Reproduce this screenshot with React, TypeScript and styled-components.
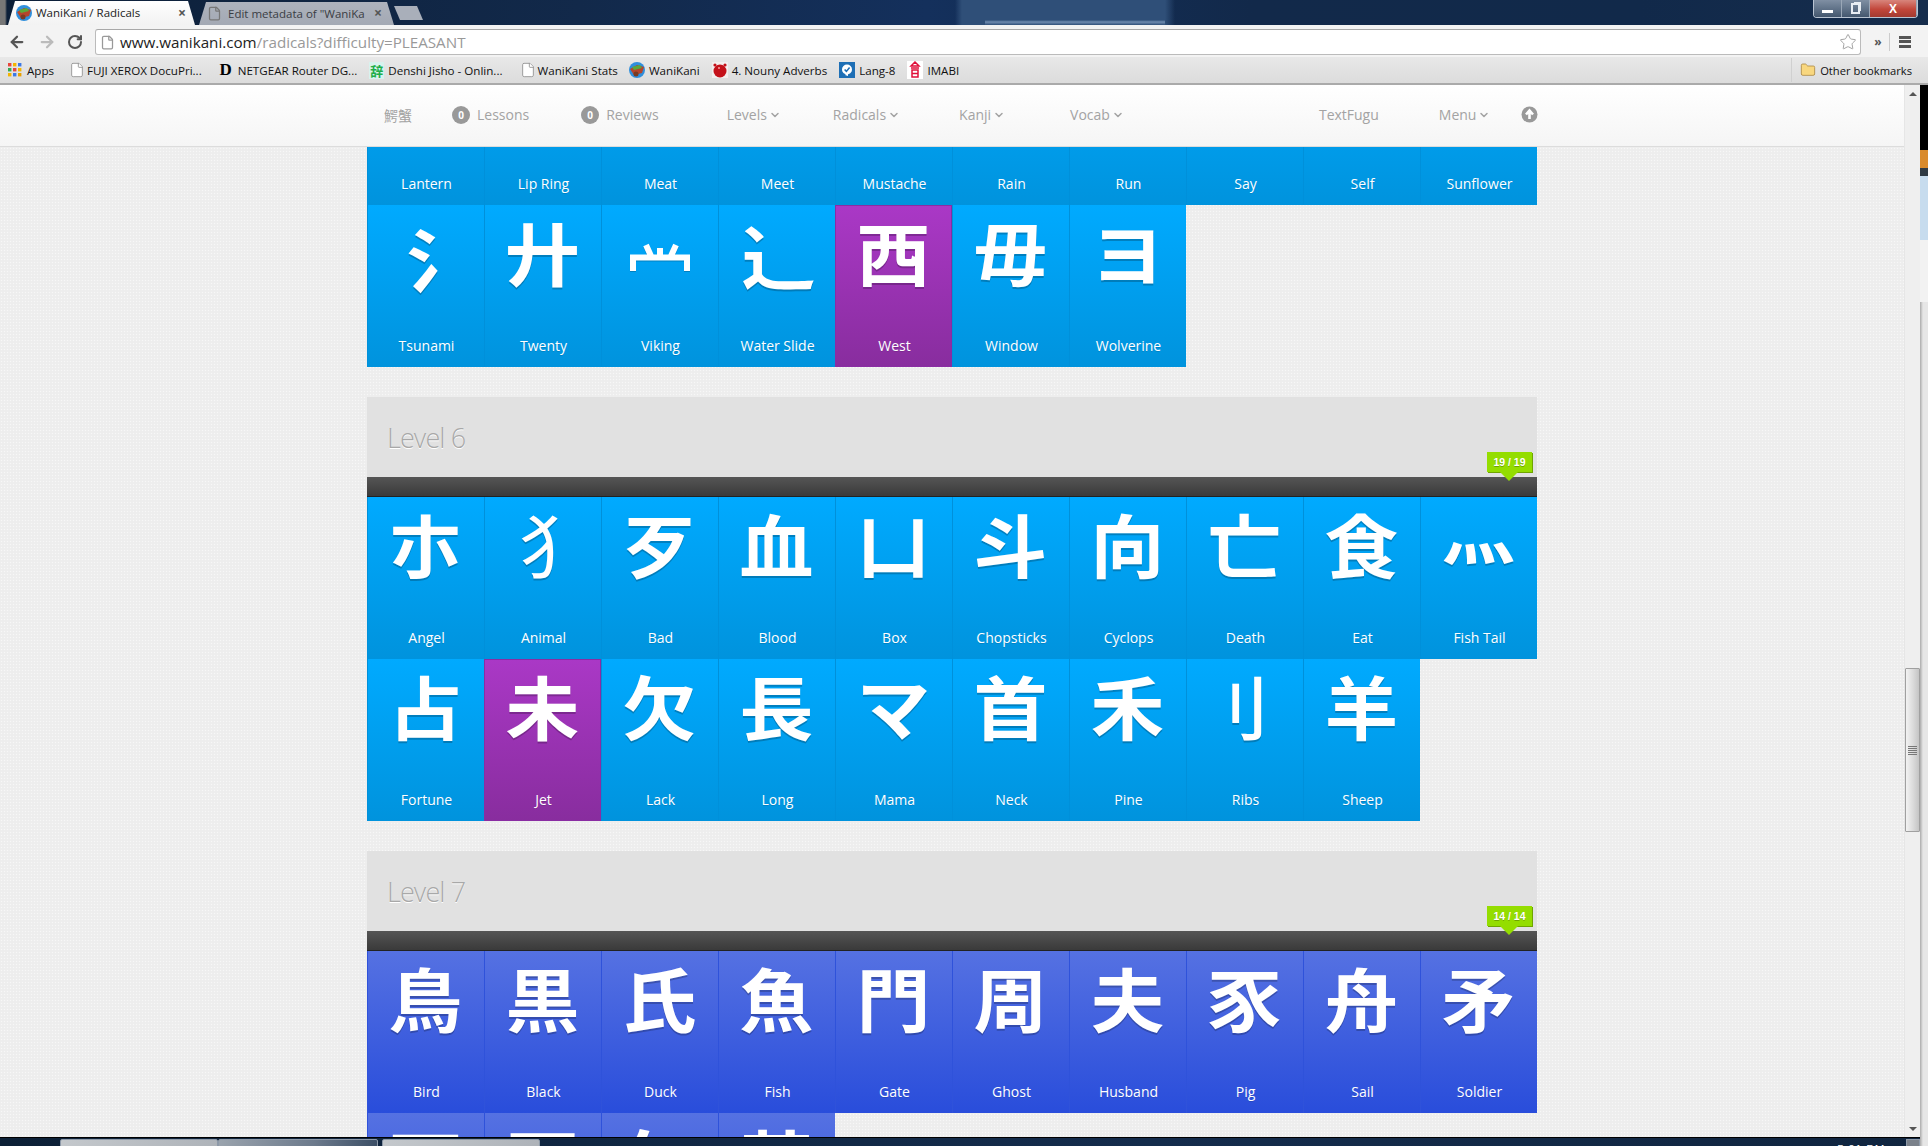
import React from "react";
import styled, { createGlobalStyle } from "styled-components";
import { ArrowLeft, ArrowRight, RotateCw, Star, File, Folder, ChevronDown } from "lucide-react";

const Global = createGlobalStyle`
  html, body { margin: 0; padding: 0; height: 1146px; overflow: hidden; background: #eee; }
  * { box-sizing: border-box; }
`;

const Shell = styled.div`
  width: 1928px; height: 1146px; display: flex; flex-direction: column; overflow: hidden;
  font-family: "Open Sans", "Noto Sans CJK JP", sans-serif;
`;

const TitleBar = styled.div`
  height: 25px; flex: none; display: flex; padding-left: 8px; align-items: flex-end;
  background:
    linear-gradient(90deg, #777 0 5px, transparent 7px),
    linear-gradient(180deg, transparent 20px, #6f8cb0 22px, transparent 25px) 985px 0 / 180px 100% no-repeat,
    linear-gradient(90deg, transparent 955px, #2f4f78 962px, #2f4f78 1165px, transparent 1175px),
    linear-gradient(90deg, #0c1f38 0, #12294a 30%, #14305c 48%, #12294a 65%, #11294a 85%, #162d4c 100%);
`;
const Tab = styled.div<{ $active?: boolean }>`
  width: ${p => (p.$active ? 187 : 195)}px; height: ${p => (p.$active ? 24 : 23)}px;
  margin-right: ${p => (p.$active ? 4 : 0)}px; padding: 0 ${p => (p.$active ? 9 : 12)}px 1px 8px;
  display: flex; align-items: center; gap: ${p => (p.$active ? 4 : 6)}px; font-size: 11.5px; white-space: nowrap;
  color: ${p => (p.$active ? "#222" : "#3a3d44")};
  background: ${p => (p.$active ? "linear-gradient(#fff,#f2f2f2)" : "linear-gradient(#aeb3bd,#a3a9b4)")};
  clip-path: polygon(0 100%, 7px 0, calc(100% - 7px) 0, 100% 100%);
`;
const TabTitle = styled.span`flex: 1;`;
const TabClose = styled.span`font-size: 14px; line-height: 16px; font-weight: 700; color: #555;`;
const NewTab = styled.div`
  width: 29px; height: 14px; margin-bottom: 5px; background: #a9afba;
  clip-path: polygon(6px 100%, 0 0, calc(100% - 6px) 0, 100% 100%);
`;
const WinControls = styled.div`
  margin-left: auto; margin-right: 10px; align-self: flex-start; width: 105px; height: 18px; display: flex;
  border: 1px solid #b9c4d2; border-top: none; border-radius: 0 0 4px 4px; overflow: hidden;
`;
const WinButton = styled.div<{ $w: number; $close?: boolean }>`
  width: ${p => p.$w}px; display: flex; align-items: center; justify-content: center;
  color: #fff; font: 700 12px "Liberation Sans", sans-serif; border-right: 1px solid #9aa7b7;
  background: ${p => (p.$close ? "linear-gradient(#d8857c,#c2463a 55%,#a23a30)" : "linear-gradient(#7f8fa3,#5f7187 55%,#44576e)")};
`;
const MinBar = styled.span`width: 11px; height: 3px; background: #fff; margin-top: 5px;`;
const RestoreBox = styled.span`width: 9px; height: 11px; border: 2px solid #e8edf3; box-shadow: 2px -2px 0 -1px #e8edf3;`;

const Toolbar = styled.div`
  height: 32px; flex: none; display: flex; align-items: center; padding-top: 2px; background: #f3f3f3; color: #666;
`;
const NavIcon = styled.span<{ $w: number; $c?: string }>`
  width: ${p => p.$w}px; display: flex; justify-content: center; color: ${p => p.$c || "#555"};
`;
const Omnibox = styled.div`
  width: 1766px; height: 26px; margin-left: 5px; display: flex; align-items: center; padding: 0 3px 0 4px; gap: 5px;
  background: #fff; border: 1px solid #bbb; border-top-color: #a8a8a8; border-radius: 3px;
  font-size: 15.2px; color: #999; white-space: nowrap;
`;
const UrlHost = styled.span`color: #222;`;
const Url = styled.span`flex: 1;`;
const ChevronMore = styled.span`width: 23px; text-align: center; font-size: 12px; color: #555; font-weight: 700; border-right: 1px solid #ccc; line-height: 18px; margin-left: 6px;`;
const Hamburger = styled.div`
  width: 30px; display: flex; justify-content: center;
  span { display: block; width: 12px; height: 12px; background: repeating-linear-gradient(#555 0 3px, transparent 3px 4.5px); }
`;

const Bookmarks = styled.div`
  height: 28px; flex: none; display: flex; align-items: center; padding: 0 16px 0 8px;
  background: linear-gradient(#e8e8e8,#dcdcdc); border-bottom: 2px solid #aaa;
  font-size: 11.6px; color: #111; white-space: nowrap;
`;
const Bookmark = styled.div<{ $left?: number; $gap?: number }>`
  display: flex; align-items: center; gap: ${p => p.$gap ?? 4}px; margin-left: ${p => p.$left ?? 13}px;
`;
const BookmarkRight = styled(Bookmark)`
  margin-left: auto; padding-left: 8px; border-left: 1px solid #d0d0d0; height: 24px; font-size: 11.2px;
`;
const JishoIcon = styled.span`
  width: 15px; height: 17px; background: #d8f2ee; color: #1fae4a; font: 700 13px/17px "Noto Sans CJK JP", sans-serif;
  display: flex; align-items: center; justify-content: center;
`;
const LogoD = styled.span`width: 16px; text-align: center; font: 900 17px "Liberation Serif", serif; color: #000;`;

const Body = styled.div`flex: 1; display: flex; min-height: 0;`;
const Main = styled.div`width: 1920px; display: flex; flex-direction: column;`;
const PageRow = styled.div`flex: 1; display: flex; min-height: 0;`;
const Page = styled.div`width: 1904px; display: flex; flex-direction: column; min-height: 0;`;
const Paper = styled.div`
  flex: 1; min-height: 0; overflow: hidden;
  background-color: #eeeeee;
  background-image: radial-gradient(rgba(255,255,255,.5) 0.7px, transparent 1px), radial-gradient(rgba(0,0,0,.02) 0.7px, transparent 1px);
  background-size: 3px 3px; background-position: 0 0, 1.5px 1.5px;
`;

const TopNav = styled.nav`
  height: 62px; flex: none; background: linear-gradient(#fff,#f5f5f5); border-bottom: 1px solid #dcdcdc;
  font-size: 14px; color: #a3a3a3;
`;
const NavInner = styled.div`width: 1170px; height: 100%; margin: 0 auto; display: flex; align-items: center; padding: 0 0 2px 0;`;
const NavItem = styled.span<{ $left: number }>`
  display: flex; align-items: center; gap: 2px; margin-left: ${p => p.$left}px; white-space: nowrap;
`;
const Count = styled.span`
  width: 18px; height: 18px; border-radius: 50%; background: #999; color: #fff; font-size: 10px; font-weight: 700;
  display: flex; align-items: center; justify-content: center; margin-right: 5px;
`;

const Scrolled = styled.div`margin-top: -104px;`;
const Section = styled.section`width: 1170px; margin: 0 auto 30px;`;
const LevelHead = styled.header`
  position: relative; height: 100px; background: #e1e1e1;
`;
const LevelTitle = styled.h2`
  margin: 0; height: 80px; padding-left: 20px; display: flex; align-items: center;
  font-size: 27px; font-weight: 300; letter-spacing: -.9px; color: #a8a8a8; text-shadow: 0 1px 0 #fff;
`;
const DarkBar = styled.div`height: 20px; background: linear-gradient(#555,#3a3a3a); border-bottom: 1px solid #222;`;
const Badge = styled.span`
  position: absolute; right: 5px; top: 55px; width: 45px; height: 20px; background: #94dd00;
  box-shadow: 1px 1px 0 #6fa500; color: #fff; font: 700 10.5px "Liberation Sans", sans-serif;
  display: flex; align-items: center; justify-content: center; text-shadow: 0 1px 0 rgba(0,0,0,.25);
  &::after {
    content: ""; position: absolute; left: 13px; top: 20px;
    border: 9px solid transparent; border-top-color: #94dd00; border-bottom: none;
  }
`;
const Grid = styled.div`display: grid; grid-template-columns: repeat(10, 117px); grid-auto-rows: 162px;`;
const palette = {
  blue: ["#00aaff", "#0093dd", "#0090da"],
  purple: ["#aa38c6", "#882d9e", "#882d9e"],
  indigo: ["#5571e2", "#294ddb", "#2f52da"],
};
type Kind = keyof typeof palette;
const TileBox = styled.div<{ $k: Kind }>`
  display: flex; flex-direction: column; align-items: center; color: #fff;
  background: linear-gradient(${p => palette[p.$k][0]}, ${p => palette[p.$k][1]});
  box-shadow: inset 1px 0 0 ${p => palette[p.$k][2]};
  ${p => p.$k === "purple" && "box-shadow: inset 0 0 0 1px #8a2da3;"}
`;
const Glyph = styled.span<{ $weight?: number; $x?: number; $y?: number }>`
  height: 102px; line-height: 102px; font-size: 69px; font-weight: ${p => p.$weight ?? 700};
  font-family: "Noto Sans CJK JP", sans-serif; text-shadow: 0 2px 0 rgba(0,0,0,.22);
  transform: translate(${p => p.$x ?? 0}px, ${p => -5 + (p.$y ?? 0)}px) scaleX(1.07);
`;
const RadicalArt = styled.span`
  height: 106px; display: flex; align-items: center;
  filter: drop-shadow(0 1px 0 rgba(0,0,0,.2));
`;
const Label = styled.span`
  margin-top: auto; padding: 0 0 11px 2px; font-size: 14px; line-height: 20px;
  text-shadow: 0 1px 0 rgba(0,0,0,.12);
`;

const Scrollbar = styled.div`
  width: 16px; display: flex; flex-direction: column; background: #efefef; border-left: 1px solid #e6e6e6;
`;
const ScrollArrow = styled.div<{ $up?: boolean }>`
  height: 17px; display: flex; align-items: center; justify-content: center;
  &::before {
    content: ""; border: 4px solid transparent;
    ${p => (p.$up ? "border-bottom: 4px solid #555; border-top: none;" : "border-top: 4px solid #555; border-bottom: none;")}
  }
`;
const Track = styled.div`flex: 1; padding-top: 566px;`;
const Thumb = styled.div`
  width: 15px; height: 164px; border: 1px solid #a0a0a0; border-radius: 1px; display: flex; align-items: center; justify-content: center;
  background: linear-gradient(90deg,#f3f3f3,#d8d8d8 60%,#c4c4c4);
  &::before { content: ""; width: 9px; height: 9px; background: repeating-linear-gradient(#777 0 1px, transparent 1px 2px); }
`;

const Taskbar = styled.div`
  height: 9px; flex: none; display: flex; align-items: flex-start; border-top: 1px solid #000; padding: 1px 0 0 60px; overflow: hidden;
  background: linear-gradient(90deg,#0c2036,#142c4c 60%,#10253f);
`;
const TaskButton = styled.div<{ $w: number; $dim?: boolean; $gap?: number }>`
  width: ${p => p.$w}px; height: 12px; margin-right: ${p => p.$gap ?? 0}px; border: 1px solid #8d99a8; border-radius: 2px 2px 0 0;
  background: ${p => (p.$dim ? "linear-gradient(90deg,#9aa3ad,#6c7a8c 60%,#3c4f66)" : "linear-gradient(90deg,#c4c8cc,#aeb3b9)")};
`;
const Clock = styled.span`
  margin-left: auto; margin-right: 21px; margin-top: 4px; font: 11.5px/12px "Liberation Sans", sans-serif; color: #fff; letter-spacing: .7px;
`;
const ShowDesktop = styled.div`width: 14px; height: 12px; border: 1px solid #8d99a8; background: #7a818a;`;

const Strip = styled.div`width: 8px; display: flex; flex-direction: column; background: #e9e9e9;`;
const StripBlock = styled.div<{ $h: number; $c: string }>`height: ${p => p.$h}px; background: ${p => p.$c};`;
const StripRest = styled.div`flex: 1; background: linear-gradient(90deg,#aaa,#e6e6e6 3px);`;

const WaniIcon = () => (
  <svg width="16" height="16" viewBox="0 0 16 16">
    <circle cx="8" cy="8" r="8" fill="#2f8fdc" />
    <path d="M1 7 L8 3 L15 5 L13 11 L5 13 Z" fill="#b5452c" />
    <path d="M3 5 L11 3 L13 6 L5 8 Z" fill="#5aa83a" />
    <circle cx="7" cy="12" r="2.5" fill="#7a3b22" />
  </svg>
);
const AppsIcon = () => {
  const c = ["#e8453c", "#f4b400", "#3b78e7", "#34a853", "#e8453c", "#f4b400", "#f4b400", "#3b78e7", "#e8a000"];
  return (
    <svg width="14" height="14" viewBox="0 0 14 14">
      {c.map((f, i) => <rect key={i} x={(i % 3) * 5} y={Math.floor(i / 3) * 5} width="3.4" height="3.4" fill={f} />)}
    </svg>
  );
};
const AppleIcon = () => (
  <svg width="16" height="16" viewBox="0 0 16 16">
    <rect width="16" height="16" fill="#f3eeee" />
    <circle cx="8" cy="9" r="6.5" fill="#c4111a" />
    <circle cx="3" cy="3" r="1.6" fill="#c4111a" />
    <circle cx="13" cy="3" r="1.6" fill="#c4111a" />
    <circle cx="7" cy="6" r="1" fill="#f6a0a0" />
  </svg>
);
const LangIcon = () => (
  <svg width="16" height="16" viewBox="0 0 16 16">
    <rect width="16" height="16" fill="#1e6fb5" />
    <circle cx="8" cy="7.5" r="5" fill="#fff" />
    <path d="M6 13 L9 10 L9 14 Z" fill="#fff" />
    <path d="M5.6 7.5 L7.4 9.4 L10.6 5.6" fill="none" stroke="#1e6fb5" strokeWidth="1.6" />
  </svg>
);
const ImabiIcon = () => (
  <svg width="16" height="18" viewBox="0 0 16 18">
    <rect width="16" height="18" fill="#fff" />
    <path d="M8 1 L12 5 H4 Z M4 7 H12 M5 9 H11 V16 H5 Z M5 12.5 H11" fill="none" stroke="#e0103a" strokeWidth="1.5" />
  </svg>
);
const UpCircle = () => (
  <svg width="17" height="17" viewBox="0 0 17 17">
    <circle cx="8.5" cy="8.5" r="8" fill="#999" />
    <path d="M8.5 13 V5 M5 8.5 L8.5 4.5 L12 8.5" fill="none" stroke="#fff" strokeWidth="2.6" />
  </svg>
);
const DocIcon = () => <File size={16} color="#888" fill="#fff" strokeWidth={1.2} />;

const VikingArt = () => (
  <RadicalArt>
    <svg width="60" height="30" viewBox="0 0 60 30" aria-label="Viking radical">
      <path d="M3 28 V14.5 H57 V28 M16 2 L21 13 M30 5 V13 M46 2 L41 13" fill="none" stroke="#fff" strokeWidth="6" />
    </svg>
  </RadicalArt>
);

type T = { g?: string; l?: string; k?: Kind; w?: number; x?: number; y?: number; art?: boolean };
const Tile = ({ g, l, k = "blue", w, x, y, art }: T) => (
  <TileBox $k={k}>
    {art && <VikingArt />}
    {g && <Glyph $weight={w} $x={x} $y={y}>{g}</Glyph>}
    {l && <Label>{l}</Label>}
  </TileBox>
);

const prior: T[] = ["Lantern", "Lip Ring", "Meat", "Meet", "Mustache", "Rain", "Run", "Say", "Self", "Sunflower"].map(l => ({ l }));
const tail: T[] = [
  { l: "Tsunami", g: "氵", x: 18, y: 6 }, { l: "Twenty", g: "廾" }, { l: "Viking", art: true }, { l: "Water Slide", g: "⻌", x: 2, y: 3 },
  { l: "West", g: "西", k: "purple" }, { l: "Window", g: "毋" }, { l: "Wolverine", g: "ヨ" },
];
const level6: T[] = [
  { l: "Angel", g: "朩" }, { l: "Animal", g: "犭", w: 400, x: 13 }, { l: "Bad", g: "歹" }, { l: "Blood", g: "血" }, { l: "Box", g: "凵" },
  { l: "Chopsticks", g: "斗" }, { l: "Cyclops", g: "向" }, { l: "Death", g: "亡" }, { l: "Eat", g: "食" }, { l: "Fish Tail", g: "灬", y: -14 },
  { l: "Fortune", g: "占" }, { l: "Jet", g: "未", k: "purple" }, { l: "Lack", g: "欠" }, { l: "Long", g: "長" }, { l: "Mama", g: "マ" },
  { l: "Neck", g: "首" }, { l: "Pine", g: "禾" }, { l: "Ribs", g: "刂", x: -12, w: 500 }, { l: "Sheep", g: "羊" },
];
const level7: T[] = [
  { l: "Bird", g: "鳥" }, { l: "Black", g: "黒" }, { l: "Duck", g: "氏" }, { l: "Fish", g: "魚" }, { l: "Gate", g: "門" },
  { l: "Ghost", g: "周" }, { l: "Husband", g: "夫" }, { l: "Pig", g: "豕" }, { l: "Sail", g: "舟" }, { l: "Soldier", g: "矛" },
  { g: "石" }, { g: "豆" }, { g: "缶" }, { g: "革" },
].map(t => ({ ...t, k: "indigo" as Kind }));

const Level = ({ n, count, tiles }: { n: number; count: string; tiles: T[] }) => (
  <Section>
    <LevelHead>
      <LevelTitle>Level {n}</LevelTitle>
      <DarkBar />
      <Badge>{count}</Badge>
    </LevelHead>
    <Grid>{tiles.map((t, i) => <Tile key={i} {...t} />)}</Grid>
  </Section>
);

export default function App() {
  return (
    <Shell>
      <Global />
      <TitleBar>
        <Tab $active><WaniIcon /><TabTitle>WaniKani / Radicals</TabTitle><TabClose>×</TabClose></Tab>
        <Tab><File size={15} color="#777" /><TabTitle>Edit metadata of "WaniKa</TabTitle><TabClose>×</TabClose></Tab>
        <NewTab />
        <WinControls>
          <WinButton $w={29}><MinBar /></WinButton>
          <WinButton $w={28}><RestoreBox /></WinButton>
          <WinButton $w={48} $close>X</WinButton>
        </WinControls>
      </TitleBar>
      <Toolbar>
        <NavIcon $w={34}><ArrowLeft size={18} strokeWidth={3} /></NavIcon>
        <NavIcon $w={26} $c="#bbb"><ArrowRight size={18} strokeWidth={3} /></NavIcon>
        <NavIcon $w={30}><RotateCw size={16} strokeWidth={3} /></NavIcon>
        <Omnibox>
          <File size={15} color="#999" />
          <Url><UrlHost>www.wanikani.com</UrlHost>/radicals?difficulty=PLEASANT</Url>
          <Star size={18} color="#999" strokeWidth={1.2} />
        </Omnibox>
        <ChevronMore>»</ChevronMore>
        <Hamburger><span /></Hamburger>
      </Toolbar>
      <Bookmarks>
        <Bookmark $left={0} $gap={5}><AppsIcon />Apps</Bookmark>
        <Bookmark $left={15} $gap={2}><DocIcon />FUJI XEROX DocuPri...</Bookmark>
        <Bookmark $left={16}><LogoD>D</LogoD>NETGEAR Router DG...</Bookmark>
        <Bookmark $left={12}><JishoIcon>辞</JishoIcon>Denshi Jisho - Onlin...</Bookmark>
        <Bookmark $left={17} $gap={2}><DocIcon />WaniKani Stats</Bookmark>
        <Bookmark $left={11} $gap={4}><WaniIcon />WaniKani</Bookmark>
        <Bookmark $left={12}><AppleIcon />4. Nouny Adverbs</Bookmark>
        <Bookmark $left={12}><LangIcon />Lang-8</Bookmark>
        <Bookmark $left={12}><ImabiIcon />IMABI</Bookmark>
        <BookmarkRight><Folder size={16} color="#a9853f" fill="#f8d77f" strokeWidth={1.2} />Other bookmarks</BookmarkRight>
      </Bookmarks>
      <Body>
        <Main>
          <PageRow>
            <Page>
              <TopNav>
                <NavInner>
                  <NavItem $left={17}>鰐蟹</NavItem>
                  <NavItem $left={40}><Count>0</Count>Lessons</NavItem>
                  <NavItem $left={52}><Count>0</Count>Reviews</NavItem>
                  <NavItem $left={68}>Levels<ChevronDown size={12} strokeWidth={3} /></NavItem>
                  <NavItem $left={52}>Radicals<ChevronDown size={12} strokeWidth={3} /></NavItem>
                  <NavItem $left={59}>Kanji<ChevronDown size={12} strokeWidth={3} /></NavItem>
                  <NavItem $left={65}>Vocab<ChevronDown size={12} strokeWidth={3} /></NavItem>
                  <NavItem $left={195}>TextFugu</NavItem>
                  <NavItem $left={60}>Menu<ChevronDown size={12} strokeWidth={3} /></NavItem>
                  <NavItem $left={31}><UpCircle /></NavItem>
                </NavInner>
              </TopNav>
              <Paper>
                <Scrolled>
                  <Section>
                    <Grid>
                      {prior.map((t, i) => <Tile key={i} {...t} k="blue" />)}
                      {tail.map((t, i) => <Tile key={i} {...t} />)}
                    </Grid>
                  </Section>
                  <Level n={6} count="19 / 19" tiles={level6} />
                  <Level n={7} count="14 / 14" tiles={level7} />
                </Scrolled>
              </Paper>
            </Page>
            <Scrollbar>
              <ScrollArrow $up />
              <Track><Thumb /></Track>
              <ScrollArrow />
            </Scrollbar>
          </PageRow>
          <Taskbar>
            <TaskButton $w={158} />
            <TaskButton $w={160} $dim $gap={4} />
            <TaskButton $w={158} />
            <Clock>5:01 PM</Clock>
            <ShowDesktop />
          </Taskbar>
        </Main>
        <Strip>
          <StripBlock $h={65} $c="#000" />
          <StripBlock $h={18} $c="#d98a2b" />
          <StripBlock $h={8} $c="#2f3a44" />
          <StripBlock $h={64} $c="#c7dcee" />
          <StripBlock $h={62} $c="#f2f2f2" />
          <StripRest />
        </Strip>
      </Body>
    </Shell>
  );
}
